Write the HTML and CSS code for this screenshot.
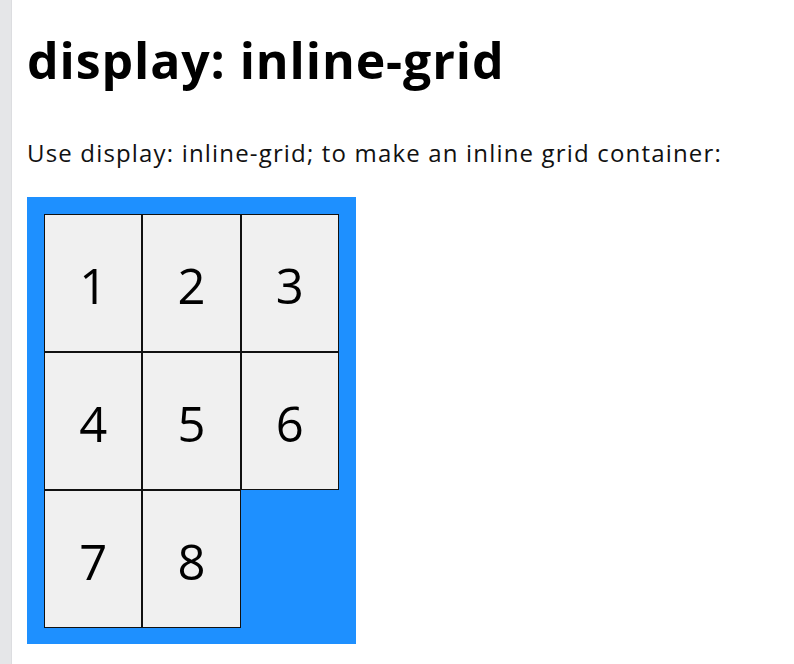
FILE: index.html
```html
<!DOCTYPE html>
<html>
<head>
<meta charset="utf-8">
<link rel="stylesheet" href="styles.css">
</head>
<body>
<div class="page">
  <div class="sidebar"></div>
  <main class="content">
    <h1 class="title">display: inline-grid</h1>
    <p class="lead">Use display: inline-grid; to make an inline grid container:</p>
    <div class="grid">
      <div class="cell">1</div>
      <div class="cell">2</div>
      <div class="cell">3</div>
      <div class="cell">4</div>
      <div class="cell">5</div>
      <div class="cell">6</div>
      <div class="cell">7</div>
      <div class="cell">8</div>
    </div>
  </main>
</div>
</body>
</html>
```

FILE: styles.css
```css
html, body {
  margin: 0;
  padding: 0;
  background: #ffffff;
}
body {
  font-family: "Open Sans", "Noto Sans", sans-serif;
  color: #000;
  width: 794px;
  height: 664px;
  overflow: hidden;
}
.page {
  display: flex;
  height: 664px;
}
.sidebar {
  width: 12px;
  flex: none;
  background: #e5e6e8;
  border-right: 1px solid #dcdde0;
  box-sizing: border-box;
}
.content {
  padding-left: 15px;
  padding-top: 22px;
}
.title {
  margin: 0;
  font-size: 50px;
  font-weight: 700;
  line-height: 76px;
  letter-spacing: 0.9px;
}
.lead {
  margin: 0;
  margin-top: 41px;
  font-size: 24px;
  line-height: 28px;
  letter-spacing: 1.17px;
  color: #111;
}
.grid {
  display: inline-grid;
  grid-template-columns: repeat(3, 98.33px);
  grid-auto-rows: 138px;
  background: #1e90ff;
  padding: 17px 17px 16px 17px;
  margin-top: 30px;
}
.cell {
  background: #f0f0f0;
  border: 1.25px solid #111;
  display: flex;
  align-items: center;
  justify-content: center;
  padding-top: 3px;
  box-sizing: border-box;
  font-size: 49px;
  font-weight: 400;
}
```
